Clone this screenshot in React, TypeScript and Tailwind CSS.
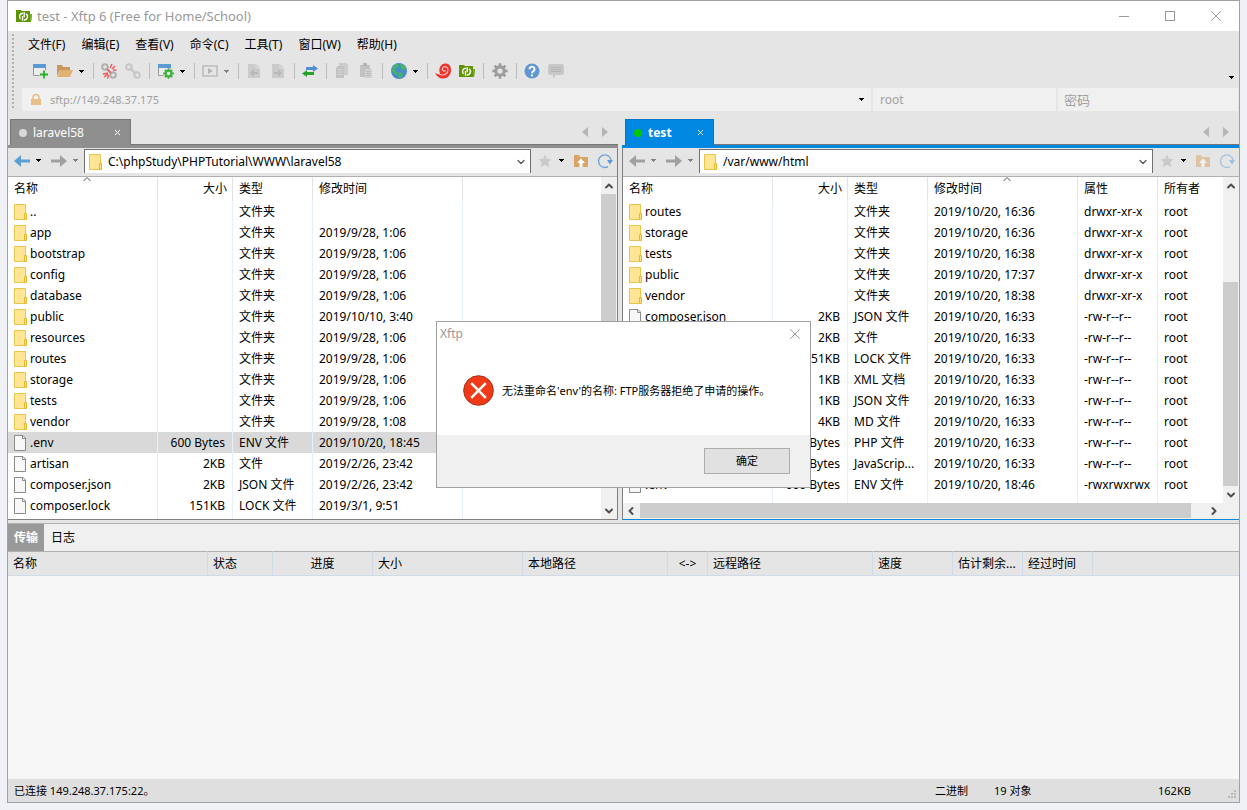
import type { ReactNode } from "react";
import clsx from "clsx";
import { ChevronDown, ChevronLeft, ChevronRight, ChevronUp, X } from "lucide-react";

type FileRow = {
  name: string;
  size?: string;
  type: string;
  date?: string;
  attrs?: string;
  folder?: boolean;
  selected?: boolean;
};

const dir = (name: string, date?: string, attrs?: string): FileRow => ({
  name,
  type: "文件夹",
  date,
  attrs,
  folder: true,
});

const LOCAL_FILES: FileRow[] = [
  dir(".."),
  dir("app", "2019/9/28, 1:06"),
  dir("bootstrap", "2019/9/28, 1:06"),
  dir("config", "2019/9/28, 1:06"),
  dir("database", "2019/9/28, 1:06"),
  dir("public", "2019/10/10, 3:40"),
  dir("resources", "2019/9/28, 1:06"),
  dir("routes", "2019/9/28, 1:06"),
  dir("storage", "2019/9/28, 1:06"),
  dir("tests", "2019/9/28, 1:06"),
  dir("vendor", "2019/9/28, 1:08"),
  { name: ".env", size: "600 Bytes", type: "ENV 文件", date: "2019/10/20, 18:45", selected: true },
  { name: "artisan", size: "2KB", type: "文件", date: "2019/2/26, 23:42" },
  { name: "composer.json", size: "2KB", type: "JSON 文件", date: "2019/2/26, 23:42" },
  { name: "composer.lock", size: "151KB", type: "LOCK 文件", date: "2019/3/1, 9:51" },
];

const REMOTE_FILES: FileRow[] = [
  dir("routes", "2019/10/20, 16:36", "drwxr-xr-x"),
  dir("storage", "2019/10/20, 16:36", "drwxr-xr-x"),
  dir("tests", "2019/10/20, 16:38", "drwxr-xr-x"),
  dir("public", "2019/10/20, 17:37", "drwxr-xr-x"),
  dir("vendor", "2019/10/20, 18:38", "drwxr-xr-x"),
  { name: "composer.json", size: "2KB", type: "JSON 文件", date: "2019/10/20, 16:33", attrs: "-rw-r--r--" },
  { name: "artisan", size: "2KB", type: "文件", date: "2019/10/20, 16:33", attrs: "-rw-r--r--" },
  { name: "composer.lock", size: "151KB", type: "LOCK 文件", date: "2019/10/20, 16:33", attrs: "-rw-r--r--" },
  { name: "phpunit.xml", size: "1KB", type: "XML 文档", date: "2019/10/20, 16:33", attrs: "-rw-r--r--" },
  { name: "package.json", size: "1KB", type: "JSON 文件", date: "2019/10/20, 16:33", attrs: "-rw-r--r--" },
  { name: "readme.md", size: "4KB", type: "MD 文件", date: "2019/10/20, 16:33", attrs: "-rw-r--r--" },
  { name: "server.php", size: "563 Bytes", type: "PHP 文件", date: "2019/10/20, 16:33", attrs: "-rw-r--r--" },
  { name: "webpack.mix.js", size: "538 Bytes", type: "JavaScrip...", date: "2019/10/20, 16:33", attrs: "-rw-r--r--" },
  { name: ".env", size: "600 Bytes", type: "ENV 文件", date: "2019/10/20, 18:46", attrs: "-rwxrwxrwx" },
];

const MENUS = ["文件(F)", "编辑(E)", "查看(V)", "命令(C)", "工具(T)", "窗口(W)", "帮助(H)"];

const QUEUE_COLUMNS = [
  { label: "名称", width: 200 },
  { label: "状态", width: 65 },
  { label: "进度", width: 100, center: true },
  { label: "大小", width: 150 },
  { label: "本地路径", width: 145 },
  { label: "<->", width: 40, center: true },
  { label: "远程路径", width: 165 },
  { label: "速度", width: 80 },
  { label: "估计剩余...", width: 70 },
  { label: "经过时间", width: 70 },
];

/* ---------- icons ---------- */

function Icon({ children, className }: { children: ReactNode; className?: string }) {
  return (
    <svg viewBox="0 0 16 16" className={clsx("size-4 shrink-0", className)} fill="none" aria-hidden="true">
      {children}
    </svg>
  );
}

function Caret({ className = "text-black" }: { className?: string }) {
  return (
    <svg viewBox="0 0 5 3" className={clsx("h-[3px] w-[5px]", className)} shapeRendering="crispEdges" aria-hidden="true">
      <path d="M0 0h5v1h-1v1h-1v1h-1v-1h-1v-1h-1z" fill="currentColor" />
    </svg>
  );
}

function XftpIcon() {
  return (
    <Icon>
      <path d="M0 2h5l1 1h8v3h2l-1 8H0z" fill="#5f9403" />
      <path d="M14 6h2l-1 8h-1z" fill="#7bab2c" />
      <path d="M6.500 12.800V8M4.500 11A3.400 3.400 0 0 1 7 5.200" stroke="#fff" strokeWidth="1.400" />
      <path d="M8.200 4.300v5M10 5.800a3.400 3.400 0 0 1-2.200 6.200" stroke="#fff" strokeWidth="1.400" />
    </Icon>
  );
}

function WindowPane() {
  return (
    <>
      <path d="M.5 1.500h12v11H.5z" fill="#ededed" stroke="#9a9a9a" />
      <path d="M0 1h13v4H0z" fill="#5b9bd5" />
    </>
  );
}

function NewSessionIcon() {
  return (
    <Icon>
      <WindowPane />
      <path d="M11 7v9M6.500 11.500h9" stroke="#e4e4e4" strokeWidth="4" />
      <path d="M11 7.500v8M7 11.500h8" stroke="#23b423" strokeWidth="1.800" />
    </Icon>
  );
}

function OpenFolderIcon() {
  return (
    <Icon>
      <path d="M0 2h5l1 2h7v3H3L0 13z" fill="#c9985c" />
      <path d="M3.500 7H16l-3 7H0z" fill="#e0b173" />
    </Icon>
  );
}

function Chain({ color }: { color: string }) {
  return (
    <>
      <circle cx="4" cy="4" r="2.800" stroke={color} strokeWidth="2" />
      <circle cx="12" cy="12" r="2.800" stroke={color} strokeWidth="2" />
      <path d="m5 5 6 6" stroke={color} strokeWidth="2.400" />
    </>
  );
}

function DisconnectIcon() {
  return (
    <Icon>
      <Chain color="#b0b0b0" />
      <path d="m9 5 2-4M11 6l3-3M12 7h3.500M7 10l-5 1M7 11l-4 3M7.500 12l-1 3.500M6 6l4 4" stroke="#ee5b5b" strokeWidth="1.500" />
    </Icon>
  );
}

function GearShape({ color }: { color: string }) {
  return (
    <>
      <circle cx="8" cy="8" r="4.200" stroke={color} strokeWidth="3.200" />
      <path
        d="M8 .300v3M8 12.700v3M.300 8h3M12.700 8h3M2.600 2.600l2 2M11.400 11.400l2 2M13.400 2.600l-2 2M4.600 11.400l-2 2"
        stroke={color}
        strokeWidth="2.600"
      />
    </>
  );
}

function SessionGearIcon() {
  return (
    <Icon>
      <WindowPane />
      <circle cx="10.500" cy="10.500" r="5.500" fill="#e6e6e6" />
      <g transform="translate(5 5) scale(.69)">
        <GearShape color="#3db43d" />
      </g>
    </Icon>
  );
}

function PlayIcon() {
  return (
    <Icon>
      <path d="M1 3h14v10H1z" stroke="#bdbdbd" strokeWidth="1.600" />
      <path d="m6 5 5 3-5 3z" fill="#b5b5b5" />
    </Icon>
  );
}

function PageArrowIcon({ flip }: { flip?: boolean }) {
  return (
    <Icon>
      <path d="M2 1h8l4 4v10H2z" fill="#cbcbcb" />
      <path d="M10 1v4h4" stroke="#dedede" />
      <path d={flip ? "M4 9h4V6l4 4-4 4v-3H4z" : "M12 9H8V6l-4 4 4 4v-3h4z"} fill="#b8b8b8" />
    </Icon>
  );
}

function SyncIcon() {
  return (
    <Icon>
      <path d="M4 4h7V2l5 3.500L11 9V7H4z" fill="#4f8ed0" />
      <path d="M12 9H5V7l-5 3.500L5 14v-2h7z" fill="#2aa22a" />
    </Icon>
  );
}

function CopyIcon() {
  return (
    <Icon>
      <path d="M5 0h7l2 2v10H5z" fill="#cccccc" />
      <path d="M2 5l2-2h6v12H2z" fill="#c2c2c2" />
      <path d="M3.500 6.500h5M3.500 9h5M3.500 11.500h5" stroke="#d6d6d6" />
    </Icon>
  );
}

function PasteIcon() {
  return (
    <Icon>
      <path d="M2 2h10v12H2z" fill="#c2c2c2" />
      <path d="M5 0h4v3H5z" fill="#b4b4b4" />
      <path d="M7 6h7v9H7z" fill="#d0d0d0" />
      <path d="M8.500 8.500h4M8.500 10.500h4M8.500 12.500h4" stroke="#b8b8b8" />
    </Icon>
  );
}

function GlobeIcon() {
  return (
    <Icon>
      <circle cx="8" cy="8" r="8" fill="#4a8ace" />
      <path d="M2 3 6 .500 8 2 7 4l-2 1-1 3 2 1v3l-2-1-3-3zM9 1l4 1 2 3-3 3-2-2zM8 9l4 1-1 4-3 1.500-1-3z" fill="#45b566" />
    </Icon>
  );
}

function XshellIcon() {
  return (
    <Icon>
      <path d="M16 7c0 5-3.500 8.500-8 8.500-3.500 0-6.500-2-8-6 2 2 4 2 5 1C3 5 6 .500 10.500.500 14 .500 16 3 16 7z" fill="#ee342c" />
      <path d="M4 11c5 2.500 9-.500 9-4a3 3 0 0 0-5-2.500C6 7 9 9 10.500 7.500" stroke="#f7c9c6" strokeWidth="1.100" />
    </Icon>
  );
}

function HelpIcon() {
  return (
    <Icon>
      <circle cx="8" cy="8" r="7.500" fill="#5e97d2" />
      <path d="M5.500 6.200a2.500 2.500 0 1 1 3.700 2.200C8.300 8.900 8 9.200 8 10.200" stroke="#fff" strokeWidth="1.800" />
      <circle cx="8" cy="12.400" r="1.100" fill="#fff" />
    </Icon>
  );
}

function ChatIcon() {
  return (
    <Icon>
      <path d="M1.500 1h13L16 2.500v8L14.500 12H8l-3 4v-4H1.500L0 10.500v-8z" fill="#c8c8c8" />
      <path d="M3 4.500h10M3 6.500h10M3 8.500h10" stroke="#b2b2b2" />
    </Icon>
  );
}

function LockIcon() {
  return (
    <Icon className="text-[#e9bf88]">
      <path d="M3 7h10v6H3z" fill="currentColor" />
      <path d="M5 7V5.500a3 3 0 0 1 6 0V7" stroke="currentColor" strokeWidth="1.600" />
    </Icon>
  );
}

function FolderIcon() {
  return (
    <svg viewBox="0 0 13 16" className="h-4 w-[13px] shrink-0" fill="none" aria-hidden="true">
      <path d="M.5.500h11v15H.5z" fill="#ffe594" stroke="#e9c64b" />
      <path d="M10.500 9.500h2v6h-2z" fill="#ffe07a" stroke="#e3b92f" />
    </svg>
  );
}

function FileIcon() {
  return (
    <svg viewBox="0 0 13 16" className="h-4 w-[13px] shrink-0" fill="none" aria-hidden="true">
      <path d="M.5.500H9L11.500 3v12.500H.5z" fill="#f8f8f8" stroke="#8b8b8b" />
      <path d="M8.500.500v3h3" stroke="#8b8b8b" />
    </svg>
  );
}

function ArrowIcon({ right, className }: { right?: boolean; className?: string }) {
  return (
    <Icon className={className}>
      <path d={right ? "M0 6.500h9V2l7 6-7 6V9.500H0z" : "M16 6.500H7V2L0 8l7 6V9.500h9z"} fill="currentColor" />
    </Icon>
  );
}

function StarIcon() {
  return (
    <Icon>
      <path d="m8 1.500 2 4.300 4.500.500-3.300 3.100.9 4.600L8 11.700 3.900 14l.9-4.600L1.500 6.300 6 5.800z" fill="#cacaca" />
    </Icon>
  );
}

function FolderUpIcon() {
  return (
    <Icon>
      <path d="M1 2h5l1 2h8v10H1z" fill="#d9a465" />
      <path d="m8 5.500 4 4.500H9.500v4h-3v-4H4z" fill="#fff" />
    </Icon>
  );
}

function RefreshIcon() {
  return (
    <Icon>
      <path d="M11 13.600A6.300 6.300 0 1 1 14 7" stroke="#6ba3d8" strokeWidth="1.400" />
      <path d="M10 7h6l-3 4.500z" fill="#5b9bd5" />
    </Icon>
  );
}

/* ---------- window chrome ---------- */

function TitleBar() {
  return (
    <header className="flex h-[30px] items-center bg-white pl-2 text-[#999]">
      <XftpIcon />
      <h1 className="ml-[5px] flex-1 text-[13px]">test - Xftp 6 (Free for Home/School)</h1>
      <button type="button" aria-label="最小化" className="flex h-full w-[46px] items-center justify-center">
        <span className="h-px w-[10px] bg-[#999]" />
      </button>
      <button type="button" aria-label="最大化" className="flex h-full w-[46px] items-center justify-center">
        <span className="size-[10px] border border-[#999]" />
      </button>
      <button type="button" aria-label="关闭" className="flex h-full w-[46px] items-center justify-center">
        <X size={18} strokeWidth={1.3} />
      </button>
    </header>
  );
}

function Tool({ label, children }: { label: string; children: ReactNode }) {
  return (
    <button type="button" aria-label={label} className="flex size-6 items-center justify-center">
      {children}
    </button>
  );
}

function Drop({ label, muted }: { label: string; muted?: boolean }) {
  return (
    <button type="button" aria-label={label} className="flex h-6 w-3 items-center pl-[2px]">
      <Caret className={muted ? "text-[#808080]" : "text-black"} />
    </button>
  );
}

function Divider({ className = "w-2" }: { className?: string }) {
  return (
    <span className={clsx("flex h-4 justify-center", className)}>
      <span className="w-px bg-[#bdbdbd]" />
    </span>
  );
}

function Toolbar() {
  return (
    <div role="toolbar" aria-label="工具栏" className="flex h-[31px] items-center pb-[3px] pl-[7px]">
      <Tool label="新建会话"><NewSessionIcon /></Tool>
      <Tool label="打开会话"><OpenFolderIcon /></Tool>
      <Drop label="会话列表" />
      <Divider />
      <Tool label="断开"><DisconnectIcon /></Tool>
      <Tool label="重新连接"><Icon><Chain color="#c6c6c6" /></Icon></Tool>
      <Divider className="w-[9px]" />
      <Tool label="属性"><SessionGearIcon /></Tool>
      <Drop label="更多属性" />
      <Divider />
      <Tool label="运行"><PlayIcon /></Tool>
      <Drop label="运行选项" muted />
      <Divider />
      <Tool label="下载"><PageArrowIcon /></Tool>
      <Tool label="上传"><PageArrowIcon flip /></Tool>
      <Divider />
      <Tool label="同步"><SyncIcon /></Tool>
      <Divider />
      <Tool label="复制"><CopyIcon /></Tool>
      <Tool label="粘贴"><PasteIcon /></Tool>
      <Divider className="w-[9px]" />
      <Tool label="编码"><GlobeIcon /></Tool>
      <Drop label="编码列表" />
      <Divider />
      <Tool label="Xshell"><XshellIcon /></Tool>
      <Tool label="Xftp"><XftpIcon /></Tool>
      <Divider className="w-[9px]" />
      <Tool label="选项"><Icon><GearShape color="#9c9c9c" /></Icon></Tool>
      <Divider />
      <Tool label="帮助"><HelpIcon /></Tool>
      <Tool label="反馈"><ChatIcon /></Tool>
      <button type="button" aria-label="更多" className="ml-auto flex h-6 w-3 items-end pb-1 pl-[2px]">
        <Caret />
      </button>
    </div>
  );
}

function AddressBar() {
  return (
    <div className="flex h-[23px] gap-[2px] pr-px text-[#a0a0a0]">
      <label className="flex min-w-0 flex-1 items-center bg-[#f0f0f0] pl-[6px] pr-[7px]">
        <LockIcon />
        <input
          aria-label="主机"
          defaultValue="sftp://149.248.37.175"
          className="ml-[6px] min-w-0 flex-1 pt-px text-[11px] outline-none"
        />
        <Caret />
      </label>
      <input aria-label="用户名" placeholder="root" className="w-[183px] bg-[#f0f0f0] pl-[7px] outline-none placeholder:text-[#a0a0a0]" />
      <input
        type="password"
        aria-label="密码"
        placeholder="密码"
        className="w-[180px] bg-[#f0f0f0] pl-[6px] text-[13px] outline-none placeholder:text-[#a0a0a0]"
      />
    </div>
  );
}

function TopBars() {
  return (
    <div className="flex pt-px">
      <div className="my-px w-[14px] bg-[radial-gradient(circle,#b4b4b4_1px,transparent_1px)] bg-[size:10px_4px] bg-repeat-y" />
      <div className="min-w-0 flex-1">
        <nav className="flex h-[25px] items-center gap-4 pl-[6px]">
          {MENUS.map((menu) => (
            <button key={menu} type="button">{menu}</button>
          ))}
        </nav>
        <Toolbar />
        <AddressBar />
      </div>
    </div>
  );
}

/* ---------- file panes ---------- */

function PaneTabs({ title, active }: { title: string; active?: boolean }) {
  return (
    <div className={clsx("flex h-[29px] items-end border-b-[3px]", active ? "border-[#0087e2] pl-[3px]" : "border-[#8f8f8f] pl-[2px]")}>
      <div
        role="tab"
        aria-selected={active ? "true" : "false"}
        className={clsx(
          "flex h-[26px] items-center border border-b-0 px-2 text-white",
          active ? "w-[89px] border-[#0078c8] bg-[#0087e2] font-bold" : "w-[121px] border-[#777] bg-[#8f8f8f]",
        )}
      >
        <span className={clsx("mr-[6px] size-2 rounded-full", active ? "bg-[#00c800]" : "bg-[#d8d8d8]")} />
        <span className="flex-1">{title}</span>
        <button type="button" aria-label="关闭标签">
          <X size={9} strokeWidth={2.5} />
        </button>
      </div>
      <div className="flex h-[26px] flex-1 items-center justify-end gap-[14px] border-b border-[#777] pr-[10px] text-[#b5b5b5]">
        <button type="button" aria-label="上一个">
          <svg viewBox="0 0 6 10" className="h-[10px] w-[6px]"><path d="M6 0v10L0 5z" fill="currentColor" /></svg>
        </button>
        <button type="button" aria-label="下一个">
          <svg viewBox="0 0 6 10" className="h-[10px] w-[6px]"><path d="M0 0v10l6-5z" fill="currentColor" /></svg>
        </button>
      </div>
    </div>
  );
}

function PathBar({ path, remote }: { path: string; remote?: boolean }) {
  const caretBox = "flex h-6 w-4 items-center justify-center";
  return (
    <div className="flex h-[29px] items-center border-b border-[#b0b0b0] pb-[3px] pl-[6px] pr-1">
      <button type="button" aria-label="后退">
        <ArrowIcon className={remote ? "text-[#a0a0a0]" : "text-[#5b9fd8]"} />
      </button>
      <button type="button" aria-label="后退历史" className={caretBox}>
        <Caret className={remote ? "text-[#808080]" : "text-black"} />
      </button>
      <button type="button" aria-label="前进" className="ml-[5px]">
        <ArrowIcon right className="text-[#a0a0a0]" />
      </button>
      <button type="button" aria-label="前进历史" className={caretBox}>
        <Caret className="text-[#808080]" />
      </button>
      <label className="ml-px mr-[6px] flex h-6 min-w-0 flex-1 items-center border border-b-0 border-[#707070] bg-white pl-1 pr-[3px] pt-[2px]">
        <FolderIcon />
        <input aria-label="路径" defaultValue={path} className="ml-[6px] min-w-0 flex-1 outline-none" />
        <ChevronDown size={12} strokeWidth={2.5} className="text-[#555]" />
      </label>
      <button type="button" aria-label="收藏"><StarIcon /></button>
      <button type="button" aria-label="收藏列表" className={caretBox}><Caret /></button>
      <button type="button" aria-label="上级目录" className={clsx("ml-1", remote && "opacity-50")}><FolderUpIcon /></button>
      <button type="button" aria-label="刷新" className={clsx("ml-2", remote && "opacity-50")}><RefreshIcon /></button>
    </div>
  );
}

function HeadCell({ label, sorted, right, last }: { label?: string; sorted?: boolean; right?: boolean; last?: boolean }) {
  return (
    <th
      className={clsx(
        "relative p-0 pl-[6px] font-normal",
        !last && "border-r border-[#e3e3e3]",
        right ? "pr-[5px] text-right" : "text-left",
      )}
    >
      {sorted && (
        <svg viewBox="0 0 8 4" className="absolute left-1/2 top-0 h-1 w-2" fill="none">
          <path d="M.5 4 4 .500 7.500 4" stroke="#555" />
        </svg>
      )}
      {label}
    </th>
  );
}

function FileTable({ files, remote }: { files: FileRow[]; remote?: boolean }) {
  const cell = "truncate border-r border-[#e6effc] p-0 pl-[6px]";
  return (
    <table className="w-full table-fixed border-separate border-spacing-0">
      <colgroup>
        <col className="w-[150px]" />
        <col className="w-[75px]" />
        <col className="w-[80px]" />
        <col className="w-[150px]" />
        {remote && <col className="w-[80px]" />}
        <col />
      </colgroup>
      <thead>
        <tr className="h-6">
          <HeadCell label="名称" sorted={!remote} />
          <HeadCell label="大小" right />
          <HeadCell label="类型" />
          <HeadCell label="修改时间" sorted={remote} />
          {remote && <HeadCell label="属性" />}
          <HeadCell label={remote ? "所有者" : undefined} last />
        </tr>
      </thead>
      <tbody>
        {files.map((file) => (
          <tr key={file.name} className={clsx("h-[21px]", file.selected && "bg-[#d9d9d9]")}>
            <td className={cell}>
              <span className="flex items-center gap-[3px]">
                {file.folder ? <FolderIcon /> : <FileIcon />}
                {file.name}
              </span>
            </td>
            <td className={clsx(cell, "pr-[7px] text-right")}>{file.size}</td>
            <td className={cell}>{file.type}</td>
            <td className={cell}>{file.date}</td>
            {remote && <td className={cell}>{file.attrs}</td>}
            <td className="p-0 pl-[6px]">{remote && "root"}</td>
          </tr>
        ))}
        <tr className="h-[21px]">
          <td className={cell} />
          <td className={cell} />
          <td className={cell} />
          <td className={cell} />
          {remote && <td className={cell} />}
          <td />
        </tr>
      </tbody>
    </table>
  );
}

function VerticalScroll({ children }: { children: ReactNode }) {
  return (
    <div className="flex w-4 shrink-0 flex-col bg-[#f0f0f0] text-[#505050]">
      <span className="flex h-[17px] items-center justify-center"><ChevronUp size={12} strokeWidth={4} /></span>
      <span className="flex flex-1 flex-col pr-px">{children}</span>
      <span className="flex h-[17px] items-center justify-center"><ChevronDown size={12} strokeWidth={4} /></span>
    </div>
  );
}

function LocalPane() {
  return (
    <section aria-label="本地" className="flex min-w-0 shrink grow-[610] basis-0 flex-col">
      <PaneTabs title="laravel58" />
      <div className="flex flex-1 flex-col border-b border-r border-[#808080]">
        <PathBar path="C:\phpStudy\PHPTutorial\WWW\laravel58" />
        <div className="flex h-[342px] bg-white">
          <div className="min-w-0 flex-1 overflow-hidden"><FileTable files={LOCAL_FILES} /></div>
          <VerticalScroll><span className="h-3/4 bg-[#cdcdcd]" /></VerticalScroll>
        </div>
      </div>
    </section>
  );
}

function RemotePane() {
  return (
    <section aria-label="远程" className="flex min-w-0 shrink grow-[617] basis-0 flex-col">
      <PaneTabs title="test" active />
      <div className="flex flex-1 flex-col border-b border-l border-b-[#0f86d6] border-l-[#808080]">
        <PathBar path="/var/www/html" remote />
        <div className="flex h-[326px] bg-white">
          <div className="min-w-0 flex-1 overflow-hidden"><FileTable files={REMOTE_FILES} remote /></div>
          <VerticalScroll><span className="mt-auto h-[70%] bg-[#cdcdcd]" /></VerticalScroll>
        </div>
        <div className="flex h-4 items-center bg-[#f0f0f0] pb-px pr-4 text-[#505050]">
          <ChevronLeft size={12} strokeWidth={4} className="ml-[2px] mr-[3px]" />
          <span className="flex h-full flex-1"><span className="w-[97%] bg-[#cdcdcd]" /></span>
          <ChevronRight size={12} strokeWidth={4} className="mr-[3px]" />
        </div>
      </div>
    </section>
  );
}

/* ---------- transfer queue ---------- */

function TransferPanel() {
  return (
    <section aria-label="传输" className="mt-[3px] flex flex-1 flex-col border-t border-[#b0b0b0] bg-[#f7f7f7]">
      <div role="tablist" className="flex h-[27px] bg-[#f0f0f0]">
        <button type="button" role="tab" aria-selected="true" className="w-9 bg-[#999] font-bold text-white">传输</button>
        <button type="button" role="tab" aria-selected="false" className="px-[7px]">日志</button>
      </div>
      <table className="w-full table-fixed border-separate border-spacing-0">
        <thead>
          <tr className="h-[25px] bg-[#e5e5e5]">
            {QUEUE_COLUMNS.map(({ label, width, center }) => (
              <th
                key={label}
                style={{ width }}
                className={clsx(
                  "whitespace-nowrap border-b border-r border-t border-[#d0dbe8] border-t-[#b0b0b0] p-0 pl-[5px] font-normal",
                  center ? "pr-[5px] text-center" : "text-left",
                )}
              >
                {label}
              </th>
            ))}
            <th className="border-b border-t border-[#d0dbe8] border-t-[#b0b0b0] p-0" />
          </tr>
        </thead>
      </table>
    </section>
  );
}

function StatusBar() {
  return (
    <footer className="flex h-[23px] items-center bg-[#dfdfdf] pl-[6px] pr-[2px] text-[11px]">
      <span className="flex-1">已连接 149.248.37.175:22。</span>
      <span className="w-[59px]">二进制</span>
      <span className="w-[164px]">19 对象</span>
      <span className="w-[70px]">162KB</span>
      <svg viewBox="0 0 9 9" className="mt-2 h-[9px] w-[9px]" shapeRendering="crispEdges" aria-hidden="true">
        <path d="M6 0h2v2H6zM6 3h2v2H6zM3 3h2v2H3zM6 6h2v2H6zM3 6h2v2H3zM0 6h2v2H0z" fill="#b8b8b8" />
      </svg>
    </footer>
  );
}

function ErrorDialog() {
  return (
    <div className="fixed inset-0 flex items-center justify-center pb-[2px]">
      <div role="alertdialog" aria-labelledby="dialog-title" aria-describedby="dialog-text" className="w-[375px] border border-[#a0a0a0] bg-white">
        <div className="flex h-[25px] items-center justify-between pl-[3px] pr-[6px] text-[#999]">
          <h2 id="dialog-title">Xftp</h2>
          <button type="button" aria-label="关闭"><X size={18} strokeWidth={1.3} /></button>
        </div>
        <div className="flex h-[88px] items-center gap-2 pl-[26px]">
          <svg viewBox="0 0 32 32" className="size-[31px]" fill="none" aria-hidden="true">
            <circle cx="16" cy="16" r="15.300" fill="#f03a17" stroke="#a82d18" />
            <path d="m8.500 8.500 15 15M23.500 8.500l-15 15" stroke="#fff" strokeWidth="2.600" />
          </svg>
          <p id="dialog-text" className="text-[11px]">无法重命名'env'的名称: FTP服务器拒绝了申请的操作。</p>
        </div>
        <div className="flex h-[52px] items-center justify-end bg-[#f0f0f0] pr-5">
          <button type="button" className="h-[26px] w-[86px] border border-[#adadad] bg-[#e1e1e1] text-[11px]">确定</button>
        </div>
      </div>
    </div>
  );
}

export default function App() {
  return (
    <div className="flex min-h-screen flex-col bg-[#f0f1f6] px-[7px] pb-[7px] font-['Noto_Sans','Noto_Sans_CJK_SC',sans-serif] text-xs leading-4 text-black">
      <main className="flex flex-1 flex-col border border-[#a0a0a5] bg-[#e5e5e5]">
        <TitleBar />
        <TopBars />
        <div className="mt-2 flex gap-1">
          <LocalPane />
          <RemotePane />
        </div>
        <TransferPanel />
        <StatusBar />
      </main>
      <ErrorDialog />
    </div>
  );
}
